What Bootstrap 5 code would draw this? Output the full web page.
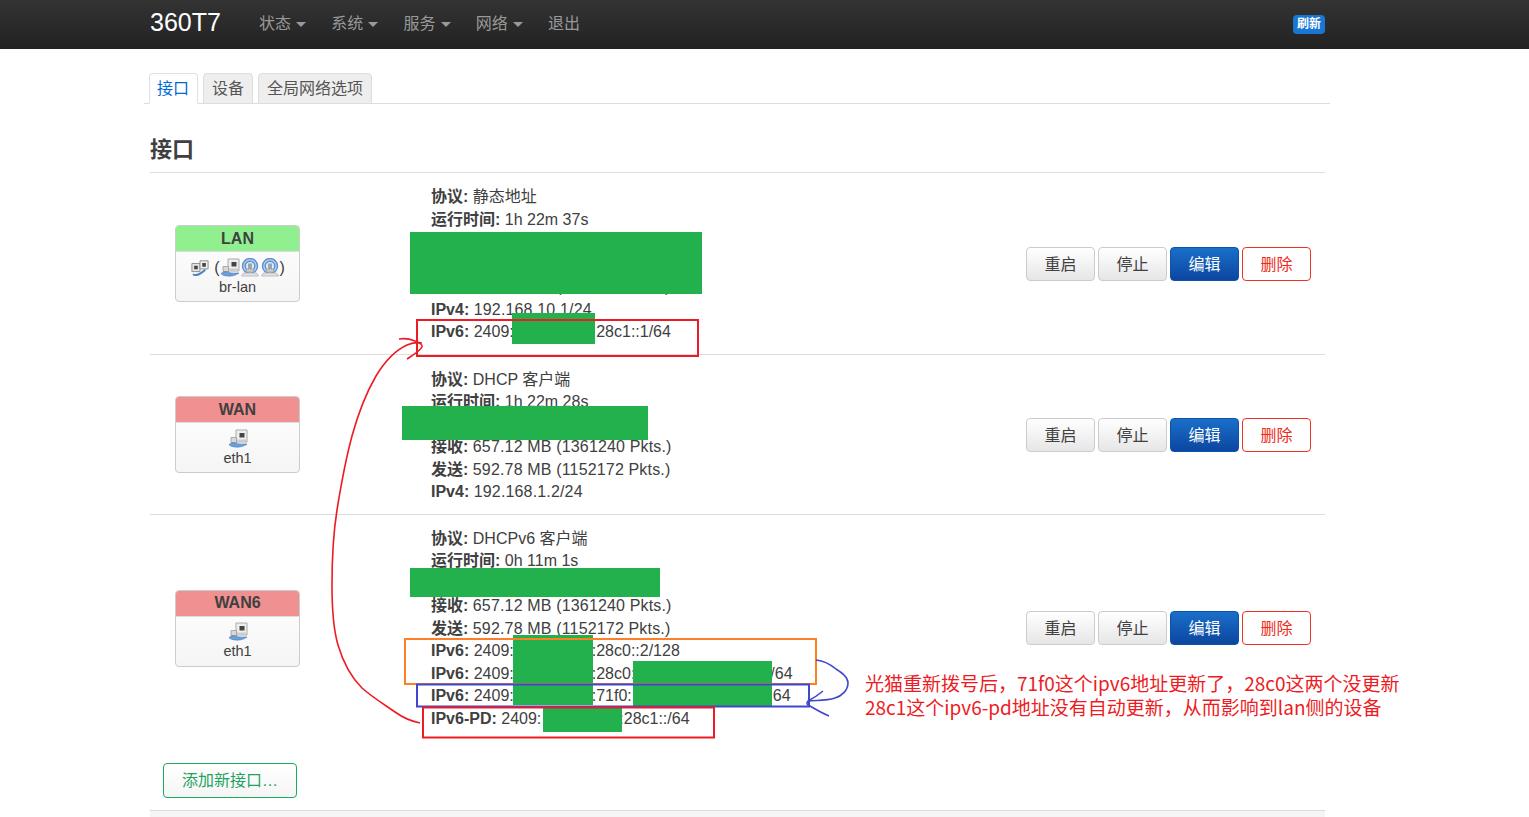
<!DOCTYPE html>
<html lang="zh-CN">
<head>
<meta charset="utf-8">
<title>360T7 - 接口</title>
<link href="https://cdn.jsdelivr.net/npm/bootstrap@5.3.0/dist/css/bootstrap.min.css" rel="stylesheet">
<style>
html, body { height: 817px; overflow: hidden; }
body { position: relative; font-family: "Liberation Sans", "Noto Sans CJK SC", sans-serif; font-size: 16px; line-height: 22.5px; color: #404040; background: #fff; }
.topbar { height: 49px; padding: 0; background: linear-gradient(#333, #222); align-items: flex-start; }
.topbar-in { width: 1529px; padding: 0 204px 0 150px; display: flex; }
.brandname { font-size: 25px; line-height: 24px; color: #fff; padding: 10px 0 0; margin-right: 38px; }
.menuitem { font-size: 16px; line-height: 22px; color: #999; padding-top: 13px; width: 72.3px; white-space: nowrap; text-decoration: none; }
.menuitem i { display: inline-block; margin-left: 5px; vertical-align: 2px; border-top: 5px solid #999; border-left: 5px solid transparent; border-right: 5px solid transparent; }
.refresh { width: 32px; height: 19px; margin-top: 15px; margin-left: auto; padding: 0; background: #1976d2; color: #fff; font-size: 12px; font-weight: 700; line-height: 19px; border-radius: 4px; text-align: center; }
.mainwrap { width: 1186px; margin-left: 144px; }
.tabrow { margin-top: 24px; padding-left: 5px; height: 31px; gap: 5px; border-bottom: 1px solid #ddd; flex-wrap: nowrap; }
.tabrow .tabbtn { height: 31px; padding: 3px 8px 0; line-height: 24px; font-size: 16px; color: #555; background: #eee; border: 1px solid #ddd; border-radius: 4px 4px 0 0; margin: 0; white-space: nowrap; }
.tabrow .tabbtn.active { color: #0069d6; background: #fff; border-bottom-color: #fff; padding: 3px 8px 0 7px; }
.sectionwrap { width: 1175px; margin-left: 6px; }
.sectitle { font-size: 22px; line-height: 30px; font-weight: 700; color: #404040; margin: 31px 0 7px; }
.ifrow { border-top: 1px solid #ddd; }
.ifrow-lan { height: 182px; }
.ifrow-wan { height: 160px; }
.ifrow-wan6 { height: 226px; }
.ifrow-wan6 .ifbadge { margin-top: 2px; }
.ifrow-wan6 .ifname { line-height: 24px; }
.ifrow-wan6 .ificons { padding-top: 4px; }
.ifrow-wan6 .ifdev { line-height: 17px; }
.ifcol { width: 281px; padding-left: 25px; flex: none; }
.ifbadge { width: 125px; height: 77px; border: 1px solid #ccc; border-radius: 4px; overflow: hidden; text-align: center; background: linear-gradient(#fff, #f5f5f5); color: #404040; }
.ifname { height: 26px; font-weight: 700; line-height: 25px; border-bottom: 1px solid #ddd; }
.ifname-up { background: #90f090; }
.ifname-down { background: #f09090; }
.ificons { height: 26px; padding-top: 6px; line-height: 18px; display: flex; justify-content: center; align-items: center; font-size: 16px; }
.ificons svg { display: block; flex: none; }
.ifdev { font-size: 14.5px; line-height: 18px; }
.statcol { flex: 1 1 auto; padding-top: 3px; white-space: nowrap; }
.numval { letter-spacing: .16px; }
.addrgap { display: inline-block; width: 78px; height: 1px; }
.addrgap-wide { width: 135px; }
.addrgap-wider { width: 141px; }
.actcol { flex: none; width: 299px; gap: 3px; }
.actbtn { width: 69px; height: 34px; padding: 0; font-size: 16px; line-height: 33px; border-radius: 4px; color: #404040; border: 1px solid #ccc; background: linear-gradient(#fff, #e6e6e6); }
.actbtn-edit { color: #fff; border-color: #0b52ad; background: linear-gradient(#1a6fc9, #0c46a0); }
.actbtn-del { color: #ee2a1a; border-color: #ee3322; background: #fff; }
.addbtn { width: 134px; height: 35px; margin: 23px 0 12px 13px; padding: 0; font-size: 16px; line-height: 33px; color: #1fa35f; background: linear-gradient(#fff, #f5f5f5); border: 1px solid #1aab5f; border-radius: 4px; }
.footline { border-top: 1px solid #ddd; background: #f5f5f5; height: 30px; }
.overlayart { position: absolute; left: 0; top: 0; pointer-events: none; }
.notetext { position: absolute; left: 865px; top: 671px; color: #ed1c24; font-family: "Noto Sans CJK SC", sans-serif; font-size: 19px; line-height: 24px; white-space: nowrap; }
</style>
</head>
<body>
<svg width="0" height="0" class="position-absolute">
  <defs>
    <symbol id="icoeth" viewBox="0 0 20 20">
      <path d="M8 1h11v12H8z" fill="#eee" stroke="#aaa"/>
      <path d="M11.500 4h5v4.500h-5z" fill="#444"/>
      <path d="M9 10.500h9V12H9z" fill="#ccc"/>
      <path d="M3 8.500h5.500v5H3z" fill="#d8d8d8" stroke="#999" stroke-width=".8"/>
      <path d="M1 15.500C4 13 7 13.500 9 14.500c3 1 6 .5 10 .5-3 2.500-8 3.500-12 3-2.500-.3-5-1-6-2.500z" fill="#6d9fd6" stroke="#3f78c4" stroke-width=".6"/>
    </symbol>
    <symbol id="icowifi" viewBox="0 0 20 20">
      <circle cx="10" cy="8" r="7.500" fill="#bcd2ee" stroke="#5c90d0" stroke-width="1.400"/>
      <circle cx="10" cy="8" r="4.800" fill="#dfe9f7" stroke="#5c90d0" stroke-width="1.400"/>
      <path d="M8 5.500h4V11H8z" fill="#9aa5b2"/>
      <path d="M7 11h6l1 3H6z" fill="#ccc" stroke="#999" stroke-width=".6"/>
      <path d="M3.500 15h13l2 3h-17z" fill="#e3e3e3" stroke="#aaa" stroke-width=".7"/>
    </symbol>
    <symbol id="icobr" viewBox="0 0 20 20">
      <path d="M1 5h9v9H1z" fill="#e4e4e4" stroke="#888"/>
      <path d="M3.500 7.500h4v4h-4z" fill="#444"/>
      <path d="M10 2h9v9h-9z" fill="#eee" stroke="#888"/>
      <path d="M12.500 4.500h4v4h-4z" fill="#444"/>
      <path d="M2 17c4 2.500 8 0 14-5" fill="none" stroke="#4a84c8" stroke-width="2"/>
    </symbol>
  </defs>
</svg>

<nav class="navbar topbar">
  <div class="topbar-in">
    <a class="brandname text-decoration-none" href="#">360T7</a>
    <a class="menuitem" href="#">状态<i></i></a>
    <a class="menuitem" href="#">系统<i></i></a>
    <a class="menuitem" href="#">服务<i></i></a>
    <a class="menuitem" href="#">网络<i></i></a>
    <a class="menuitem" href="#">退出</a>
    <span class="badge refresh">刷新</span>
  </div>
</nav>

<main class="mainwrap">
  <ul class="nav nav-tabs tabrow">
    <li class="nav-item"><a class="nav-link tabbtn active" href="#">接口</a></li>
    <li class="nav-item"><a class="nav-link tabbtn" href="#">设备</a></li>
    <li class="nav-item"><a class="nav-link tabbtn" href="#">全局网络选项</a></li>
  </ul>

  <div class="sectionwrap">
    <h2 class="sectitle">接口</h2>

    <div class="ifrow ifrow-lan d-flex align-items-center">
      <div class="ifcol">
        <div class="ifbadge">
          <div class="ifname ifname-up">LAN</div>
          <div class="ificons"><svg width="20" height="18"><use href="#icobr"/></svg><span class="ms-1">(</span><svg width="20" height="20"><use href="#icoeth"/></svg><svg width="20" height="20"><use href="#icowifi"/></svg><svg width="20" height="20"><use href="#icowifi"/></svg><span>)</span></div>
          <div class="ifdev">br-lan</div>
        </div>
      </div>
      <div class="statcol">
        <div><strong>协议:</strong> 静态地址</div>
        <div><strong>运行时间:</strong> 1h 22m 37s</div>
        <div><strong>MAC:</strong> 00:00:00:00:00:00</div>
        <div><strong>接收:</strong> <span class="numval">657.12 MB (1361240 Pkts.)</span></div>
        <div><strong>发送:</strong> <span class="numval">592.78 MB (1152172 Pkts.)</span></div>
        <div><strong>IPv4:</strong> <span class="numval">192.168.10.1/24</span></div>
        <div><strong>IPv6:</strong> 2409:<span class="addrgap"></span>:28c1::1/64</div>
      </div>
      <div class="actcol d-flex">
        <button class="btn actbtn">重启</button><button class="btn actbtn">停止</button><button class="btn actbtn actbtn-edit">编辑</button><button class="btn actbtn actbtn-del">删除</button>
      </div>
    </div>

    <div class="ifrow ifrow-wan d-flex align-items-center">
      <div class="ifcol">
        <div class="ifbadge">
          <div class="ifname ifname-down">WAN</div>
          <div class="ificons"><svg width="20" height="20"><use href="#icoeth"/></svg></div>
          <div class="ifdev">eth1</div>
        </div>
      </div>
      <div class="statcol">
        <div><strong>协议:</strong> DHCP 客户端</div>
        <div><strong>运行时间:</strong> 1h 22m 28s</div>
        <div><strong>MAC:</strong> 00:00:00:00:00:00</div>
        <div><strong>接收:</strong> <span class="numval">657.12 MB (1361240 Pkts.)</span></div>
        <div><strong>发送:</strong> <span class="numval">592.78 MB (1152172 Pkts.)</span></div>
        <div><strong>IPv4:</strong> <span class="numval">192.168.1.2/24</span></div>
      </div>
      <div class="actcol d-flex">
        <button class="btn actbtn">重启</button><button class="btn actbtn">停止</button><button class="btn actbtn actbtn-edit">编辑</button><button class="btn actbtn actbtn-del">删除</button>
      </div>
    </div>

    <div class="ifrow ifrow-wan6 d-flex align-items-center">
      <div class="ifcol">
        <div class="ifbadge">
          <div class="ifname ifname-down">WAN6</div>
          <div class="ificons"><svg width="20" height="20"><use href="#icoeth"/></svg></div>
          <div class="ifdev">eth1</div>
        </div>
      </div>
      <div class="statcol">
        <div><strong>协议:</strong> DHCPv6 客户端</div>
        <div><strong>运行时间:</strong> 0h 11m 1s</div>
        <div><strong>MAC:</strong> 00:00:00:00:00:00</div>
        <div><strong>接收:</strong> <span class="numval">657.12 MB (1361240 Pkts.)</span></div>
        <div><strong>发送:</strong> <span class="numval">592.78 MB (1152172 Pkts.)</span></div>
        <div><strong>IPv6:</strong> 2409:<span class="addrgap"></span>:28c0::2/128</div>
        <div><strong>IPv6:</strong> 2409:<span class="addrgap"></span>:28c0:<span class="addrgap addrgap-wide"></span>/64</div>
        <div><strong>IPv6:</strong> 2409:<span class="addrgap"></span>:71f0:<span class="addrgap addrgap-wider"></span>64</div>
        <div><strong>IPv6-PD:</strong> 2409:<span class="addrgap"></span>:28c1::/64</div>
      </div>
      <div class="actcol d-flex">
        <button class="btn actbtn">重启</button><button class="btn actbtn">停止</button><button class="btn actbtn actbtn-edit">编辑</button><button class="btn actbtn actbtn-del">删除</button>
      </div>
    </div>

    <button class="btn addbtn d-block">添加新接口…</button>
    <div class="footline"></div>
  </div>
</main>

<svg class="overlayart" width="1529" height="817" viewBox="0 0 1529 817">
  <g fill="#23b14d">
    <rect x="410" y="232" width="292" height="62"/>
    <rect x="512" y="313" width="83" height="31"/>
    <rect x="402" y="406" width="246" height="34"/>
    <rect x="410" y="568" width="250" height="29"/>
    <rect x="513" y="635" width="80" height="70"/>
    <rect x="633" y="661" width="139" height="45"/>
    <rect x="543" y="707" width="79" height="25"/>
  </g>
  <g fill="none" stroke-width="2">
    <rect x="417" y="320" width="281" height="36" stroke="#ed1c24"/>
    <rect x="405" y="639" width="411" height="45" stroke="#ff7f27"/>
    <rect x="417" y="684.500" width="392" height="22" stroke="#3f48cc"/>
    <rect x="423" y="707.500" width="291" height="30" stroke="#ed1c24"/>
    <path d="M420 723C410 721 402 717 395 712C385 705 372 697 362 688C350 676 343 662 338 645C333 628 332 605 332 585C332 560 333 535 337 510C341 485 345 462 352 436C358 414 365 395 376 376C385 361 396 350 407 345C412 343 417 342 422 343" stroke="#ed1c24" stroke-width="1.600"/>
    <path d="M399 339C405 338 410 339 415 341C420 343 423 345 422 347C420 351 413 355 407 359" stroke="#ed1c24" stroke-width="1.600"/>
    <path d="M816 660C824 661 830 664 836 669C842 673 848 677 848 683C848 690 842 696 835 698C826 701 816 700 808 701" stroke="#3f48cc" stroke-width="1.600"/>
    <path d="M823 691C817 696 812 699 808 701C806 703 807 705 810 706C815 709 822 713 829 716" stroke="#3f48cc" stroke-width="1.600"/>
  </g>
</svg>
<div class="notetext">光猫重新拨号后，71f0这个ipv6地址更新了，28c0这两个没更新<br>28c1这个ipv6-pd地址没有自动更新，从而影响到lan侧的设备</div>

<script src="https://cdn.jsdelivr.net/npm/bootstrap@5.3.0/dist/js/bootstrap.bundle.min.js"></script>
</body>
</html>
